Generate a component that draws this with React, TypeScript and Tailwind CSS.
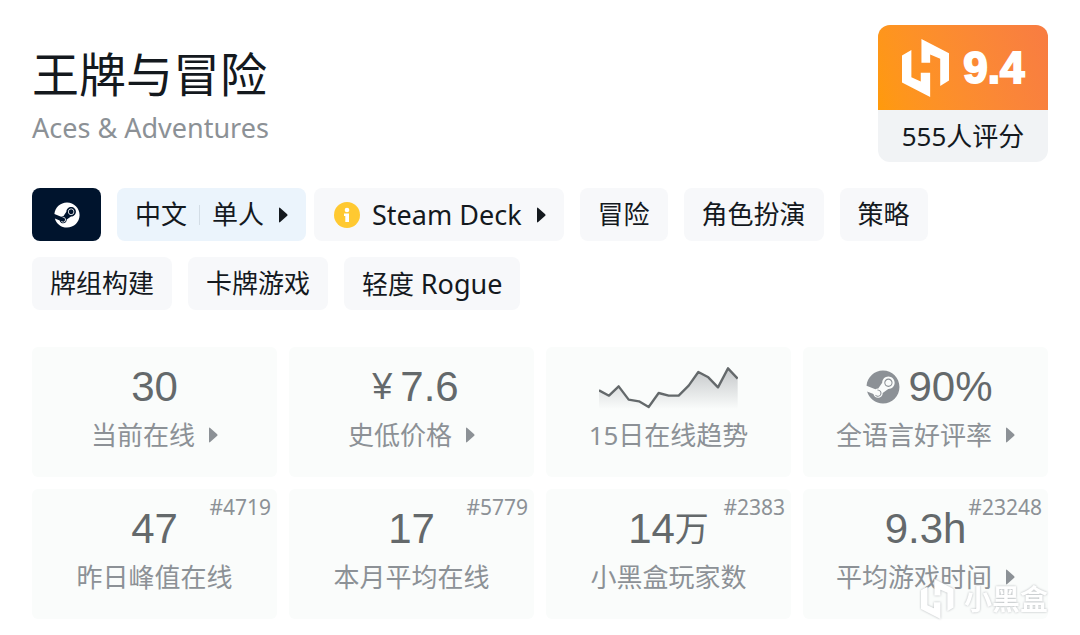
import type { ReactNode } from "react";
import { FaSteam } from "react-icons/fa";

interface IStat {
  label: string;
  value: ReactNode;
  rank?: string;
  hasLink?: boolean;
}

function HeyboxLogo({ className }: { className?: string }) {
  return (
    <svg className={className} viewBox="132 87 142 173" fill="currentColor" aria-hidden="true">
      <path d="M190 87L273 130V210L246 227V146L216 133V158H190Z" />
      <path d="M216 260L132 217V136L160 120V201L188 214V188H216Z" />
    </svg>
  );
}

function Arrow({ className }: { className?: string }) {
  return (
    <svg className={className} width="9" height="16" viewBox="0 0 9 16" fill="currentColor" aria-hidden="true">
      <path d="M0 1.5Q0 0 1.2 1L8.2 7.2Q9 8 8.2 8.8L1.2 15Q0 16 0 14.5Z" />
    </svg>
  );
}

function TrendChart() {
  const line = "174,154 204,170 233,142 263,182 294,187 323,204 353,162 383,170 413,170 443,140 472,99 502,115 531,145 561,88 590,119";
  return (
    <svg className="w-[139px]" viewBox="174 81 417 129" aria-hidden="true">
      <defs>
        <linearGradient id="trend" x1="0" y1="0" x2="0" y2="1">
          <stop offset="0" stopColor="#c4c7c9" />
          <stop offset="1" stopColor="#fafcfb" />
        </linearGradient>
      </defs>
      <polygon points={`174,210 ${line} 590,210`} fill="url(#trend)" />
      <polyline points={line} fill="none" stroke="#64696b" strokeWidth="7" strokeLinejoin="round" />
    </svg>
  );
}

const genres: { id: string; name: ReactNode }[] = [
  { id: "adventure", name: "冒险" },
  { id: "rpg", name: "角色扮演" },
  { id: "strategy", name: "策略" },
  { id: "deckbuilding", name: "牌组构建" },
  { id: "card", name: "卡牌游戏" },
  {
    id: "roguelite",
    name: (
      <>
        轻度 <span className="text-[27px]">Rogue</span>
      </>
    ),
  },
];

const stats: IStat[] = [
  { label: "当前在线", value: "30", hasLink: true },
  {
    label: "史低价格",
    value: (
      <>
        <span className="mx-2 text-[36px]">¥</span>7.6
      </>
    ),
    hasLink: true,
  },
  { label: "15日在线趋势", value: <TrendChart /> },
  {
    label: "全语言好评率",
    value: (
      <>
        <FaSteam className="mx-2 size-[34px] text-[#8c9196]" />
        90%
      </>
    ),
    hasLink: true,
  },
  { label: "昨日峰值在线", value: "47", rank: "#4719" },
  { label: "本月平均在线", value: "17", rank: "#5779" },
  {
    label: "小黑盒玩家数",
    value: (
      <>
        14<span className="text-[34px]">万</span>
      </>
    ),
    rank: "#2383",
  },
  { label: "平均游戏时间", value: "9.3h", rank: "#23248", hasLink: true },
];

function StatCard({ label, value, rank, hasLink }: IStat) {
  const Tag = hasLink ? "button" : "div";
  return (
    <Tag className="relative flex flex-col items-center rounded-md bg-[#fafcfb] pt-5 pb-[26px]">
      {rank && <span className="absolute top-1 right-[6px] text-[21px] leading-7 text-[#8c9196]">{rank}</span>}
      <span className="flex h-10 items-center font-['Liberation_Sans','Noto_Sans_CJK_SC',sans-serif] text-[42px] leading-10 text-[#64696b]">
        {value}
      </span>
      <span className="mt-3 flex items-center text-[26px] leading-8 text-[#8c9196]">
        {label}
        {hasLink && <Arrow className="ml-[14px]" />}
      </span>
    </Tag>
  );
}

function App() {
  return (
    <main className="relative bg-white px-8 pt-[25px] pb-4 font-['Noto_Sans','Noto_Sans_CJK_SC',sans-serif] text-[#14191e]">
      <header className="flex items-start justify-between">
        <div className="pt-[19px]">
          <h1 className="text-[47px] leading-[60px]">王牌与冒险</h1>
          <p className="mt-2 text-[27px] leading-8 text-[#8c9196]">Aces &amp; Adventures</p>
        </div>
        <div className="w-[170px] overflow-hidden rounded-xl bg-[#f1f3f5]">
          <div className="flex h-[85px] items-center justify-center gap-[14px] bg-linear-70 from-[#ff9a0a] to-[#f87c42] text-white">
            <HeyboxLogo className="h-[58px]" />
            <span className="font-['Liberation_Sans',sans-serif] text-[44px] leading-none font-bold [-webkit-text-stroke:2px_white]">
              9.4
            </span>
          </div>
          <p className="text-center text-[26px] leading-[52px]">555人评分</p>
        </div>
      </header>

      {/* platform and genre tags */}
      <div className="mt-[26px] flex flex-wrap gap-4 text-[26px] leading-[53px]">
        <button className="flex w-[69px] items-center justify-center rounded-lg bg-[#00142d] text-white" aria-label="Steam">
          <FaSteam className="size-[26px]" />
        </button>
        <button className="flex items-center rounded-lg bg-[#ebf4fc] px-[18px]">
          中文
          <span className="mx-3 h-5 w-px bg-[#d3dde6]" />
          单人
          <Arrow className="ml-[15px]" />
        </button>
        <button className="-ml-2 flex h-[53px] items-center rounded-lg bg-[#f7f8fa] pr-[18px] pl-5 text-[27px]">
          <svg className="mr-3 size-[26px]" viewBox="0 0 26 26" aria-hidden="true">
            <circle cx="13" cy="13" r="13" fill="#ffc931" />
            <circle cx="13" cy="8" r="2.3" fill="white" />
            <path d="M10 11.5H15V20H11.3V14H10Z" fill="white" />
          </svg>
          Steam Deck
          <Arrow className="ml-[15px]" />
        </button>
        {genres.map((genre) => (
          <button key={genre.id} className="h-[53px] rounded-lg bg-[#f7f8fa] px-[18px]">
            {genre.name}
          </button>
        ))}
      </div>

      {/* stats */}
      <div className="mt-[37px] grid grid-cols-4 gap-3">
        {stats.map((stat) => (
          <StatCard key={stat.label} {...stat} />
        ))}
      </div>

      {/* watermark */}
      <div className="pointer-events-none absolute right-8 bottom-4 flex items-center gap-[10px] text-white drop-shadow-[0_0_1px_#b4b8bb]">
        <HeyboxLogo className="h-10" />
        <span className="text-[28px] leading-9 font-bold">小黑盒</span>
      </div>
    </main>
  );
}

export default App;
